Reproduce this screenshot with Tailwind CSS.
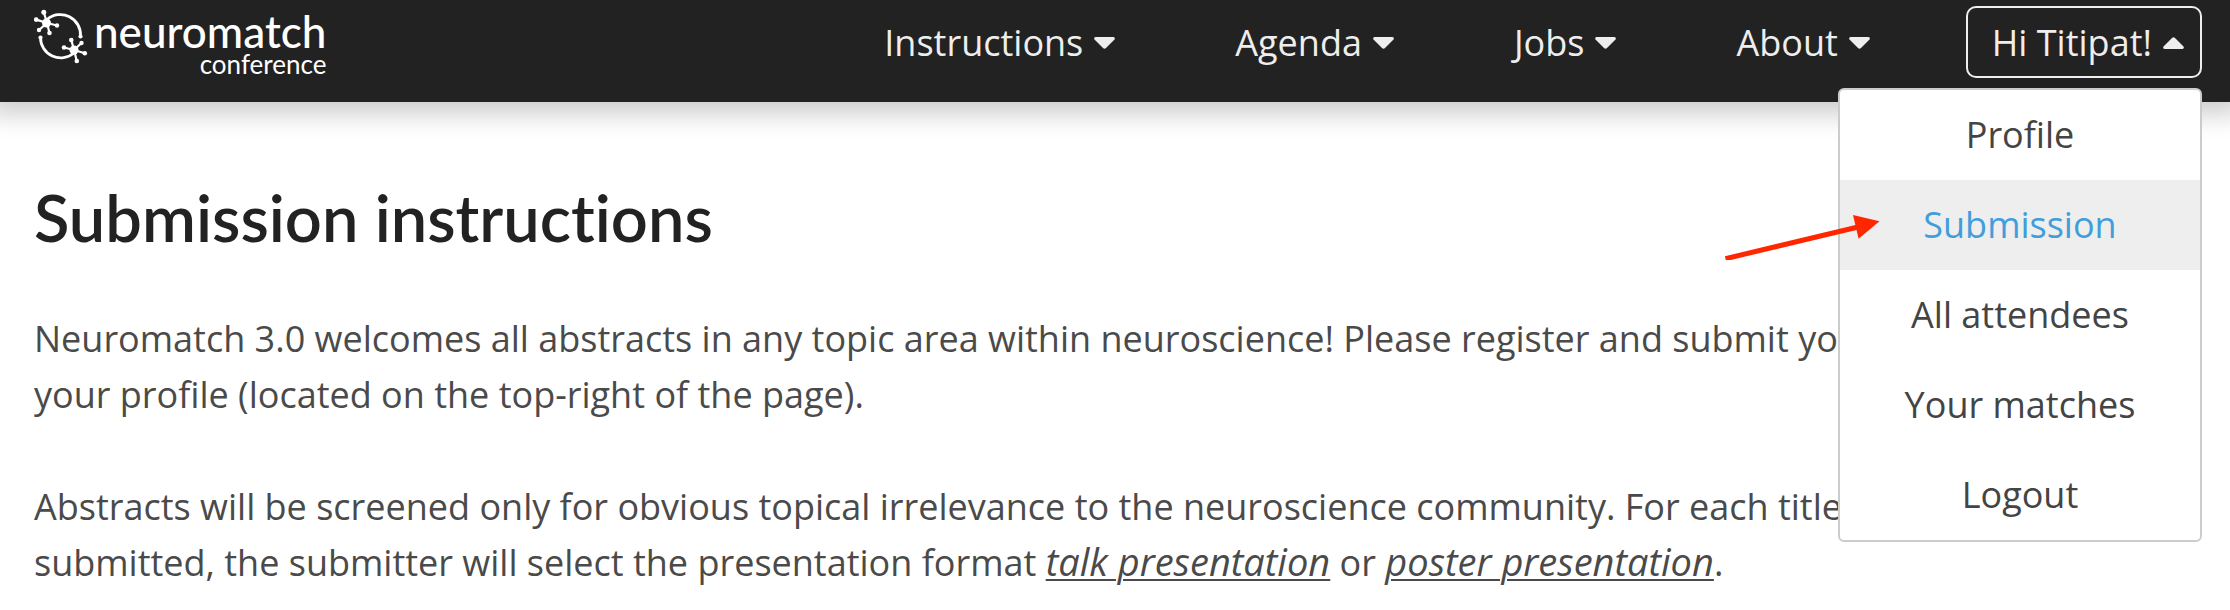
<!DOCTYPE html>
<html lang="en">
<head>
<meta charset="utf-8">
<title>Neuromatch Conference - Submission instructions</title>
<script src="https://cdn.jsdelivr.net/npm/@tailwindcss/browser@4"></script>
</head>
<body class="min-h-screen bg-white font-['Open_Sans',sans-serif] text-[36px] leading-[56px] text-[#4a4a4a]">
<header class="relative z-10 flex items-start justify-between bg-[#222] px-7 pt-1.5 pb-6 pl-[34px] text-[#eee] shadow-[0_0_24px_12px_rgba(0,0,0,0.2)]">
  <a href="#" class="flex items-start gap-1 text-white" aria-label="neuromatch conference">
    <svg class="mt-0.5 h-14 w-14" viewBox="34 8 56 56" fill="none" stroke="currentColor" stroke-linecap="round" aria-hidden="true">
      <path stroke-width="2.8" d="M47 19.500A20.300 20.300 0 0 1 80.500 36.500M40.500 37.500A20.300 20.300 0 0 0 74 53"/>
      <path stroke-width="2.200" d="M47 23L43.800 12.300M47 23L36.200 19.600M47 23L39 30M47 23L49.500 33M47 23L57 25.500M74 50L71.300 40M74 50L64 47.500M74 50L81.500 43M74 50L84.800 53.300M74 50L76.800 61"/>
      <g fill="currentColor" stroke="none">
        <circle cx="46.500" cy="23" r="4.500"/><circle cx="74" cy="50" r="4.500"/>
        <circle cx="43.800" cy="12.300" r="2.500"/><circle cx="36.200" cy="19.600" r="2.300"/><circle cx="39" cy="30" r="2.200"/><circle cx="49.500" cy="33" r="2.300"/><circle cx="57" cy="25.500" r="2.200"/>
        <circle cx="71.300" cy="40" r="2.300"/><circle cx="64" cy="47.500" r="2.300"/><circle cx="81.500" cy="43" r="2.200"/><circle cx="84.800" cy="53.300" r="2.300"/><circle cx="76.800" cy="61" r="2.300"/>
        <circle cx="80.500" cy="36.500" r="2.100"/><circle cx="40.500" cy="37.500" r="2.100"/>
      </g>
    </svg>
    <span class="flex flex-col items-end font-[Lato,sans-serif]">
      <span class="text-[44px] leading-[50px] font-medium">neuromatch</span>
      <span class="text-[26px] leading-4">conference</span>
    </span>
  </a>
  <nav class="flex items-start" aria-label="Main">
    <div class="flex gap-[120px] pt-[9px]">
      <button class="flex items-center gap-[11px]">Instructions<svg class="h-3 w-[21px]" viewBox="0 0 21 12" fill="currentColor" aria-hidden="true"><path d="M1.500 0H19.500Q21.500 0.500 20.500 2.500L12 11Q10.500 12.500 9 11L0.500 2.500Q-0.500 0.500 1.500 0Z"/></svg></button>
      <button class="flex items-center gap-[11px]">Agenda<svg class="h-3 w-[21px]" viewBox="0 0 21 12" fill="currentColor" aria-hidden="true"><path d="M1.500 0H19.500Q21.500 0.500 20.500 2.500L12 11Q10.500 12.500 9 11L0.500 2.500Q-0.500 0.500 1.500 0Z"/></svg></button>
      <button class="flex items-center gap-[11px]">Jobs<svg class="h-3 w-[21px]" viewBox="0 0 21 12" fill="currentColor" aria-hidden="true"><path d="M1.500 0H19.500Q21.500 0.500 20.500 2.500L12 11Q10.500 12.500 9 11L0.500 2.500Q-0.500 0.500 1.500 0Z"/></svg></button>
      <button class="flex items-center gap-[11px]">About<svg class="h-3 w-[21px]" viewBox="0 0 21 12" fill="currentColor" aria-hidden="true"><path d="M1.500 0H19.500Q21.500 0.500 20.500 2.500L12 11Q10.500 12.500 9 11L0.500 2.500Q-0.500 0.500 1.500 0Z"/></svg></button>
    </div>
    <div class="relative ml-24">
      <button class="flex items-center gap-[11px] rounded-[10px] border-2 border-[#eee] pt-[7px] pr-4 pb-[5px] pl-6" aria-expanded="true">Hi Titipat!<svg class="h-3 w-[21px]" viewBox="0 0 21 12" fill="currentColor" aria-hidden="true"><path d="M1.500 12H19.500Q21.500 11.500 20.500 9.500L12 1Q10.500 -0.500 9 1L0.500 9.500Q-0.500 11.500 1.500 12Z"/></svg></button>
      <ul class="absolute top-full right-0 mt-2.5 w-[364px] overflow-hidden rounded-md border-2 border-[#ccc] bg-white text-center text-[#444]">
        <li><a href="#" class="block py-[17px]">Profile</a></li>
        <li><a href="#" class="block bg-[#eee] py-[17px] text-[#429edb]">Submission</a></li>
        <li><a href="#" class="block py-[17px]">All attendees</a></li>
        <li><a href="#" class="block py-[17px]">Your matches</a></li>
        <li><a href="#" class="block py-[17px]">Logout</a></li>
      </ul>
      <svg class="absolute top-[206px] right-[320px] h-12 w-40" viewBox="1722 212 160 48" aria-hidden="true"><path d="M1725.500 258.700L1857 227.200" stroke="#ff2600" stroke-width="5"/><path d="M1879.500 221.300L1853 215L1858.600 238.700Z" fill="#ff2600"/></svg>
    </div>
  </nav>
</header>
<main class="px-[34px] pt-[75px]">
  <h1 class="mb-[54px] font-[Lato,sans-serif] text-[65px] leading-[80px] font-semibold text-[#222] [font-variant-ligatures:none]">Submission instructions</h1>
  <p class="mb-14">Neuromatch 3.0 welcomes all abstracts in any topic area within neuroscience! Please register and submit your<br>your profile (located on the top-right of the page).</p>
  <p>Abstracts will be screened only for obvious topical irrelevance to the neuroscience community. For each title<br>submitted, the submitter will select the presentation format <em class="text-[38px] leading-none underline decoration-2 underline-offset-[3px]">talk presentation</em> or <em class="text-[38px] leading-none underline decoration-2 underline-offset-[3px]">poster presentation</em>.</p>
</main>
</body>
</html>
